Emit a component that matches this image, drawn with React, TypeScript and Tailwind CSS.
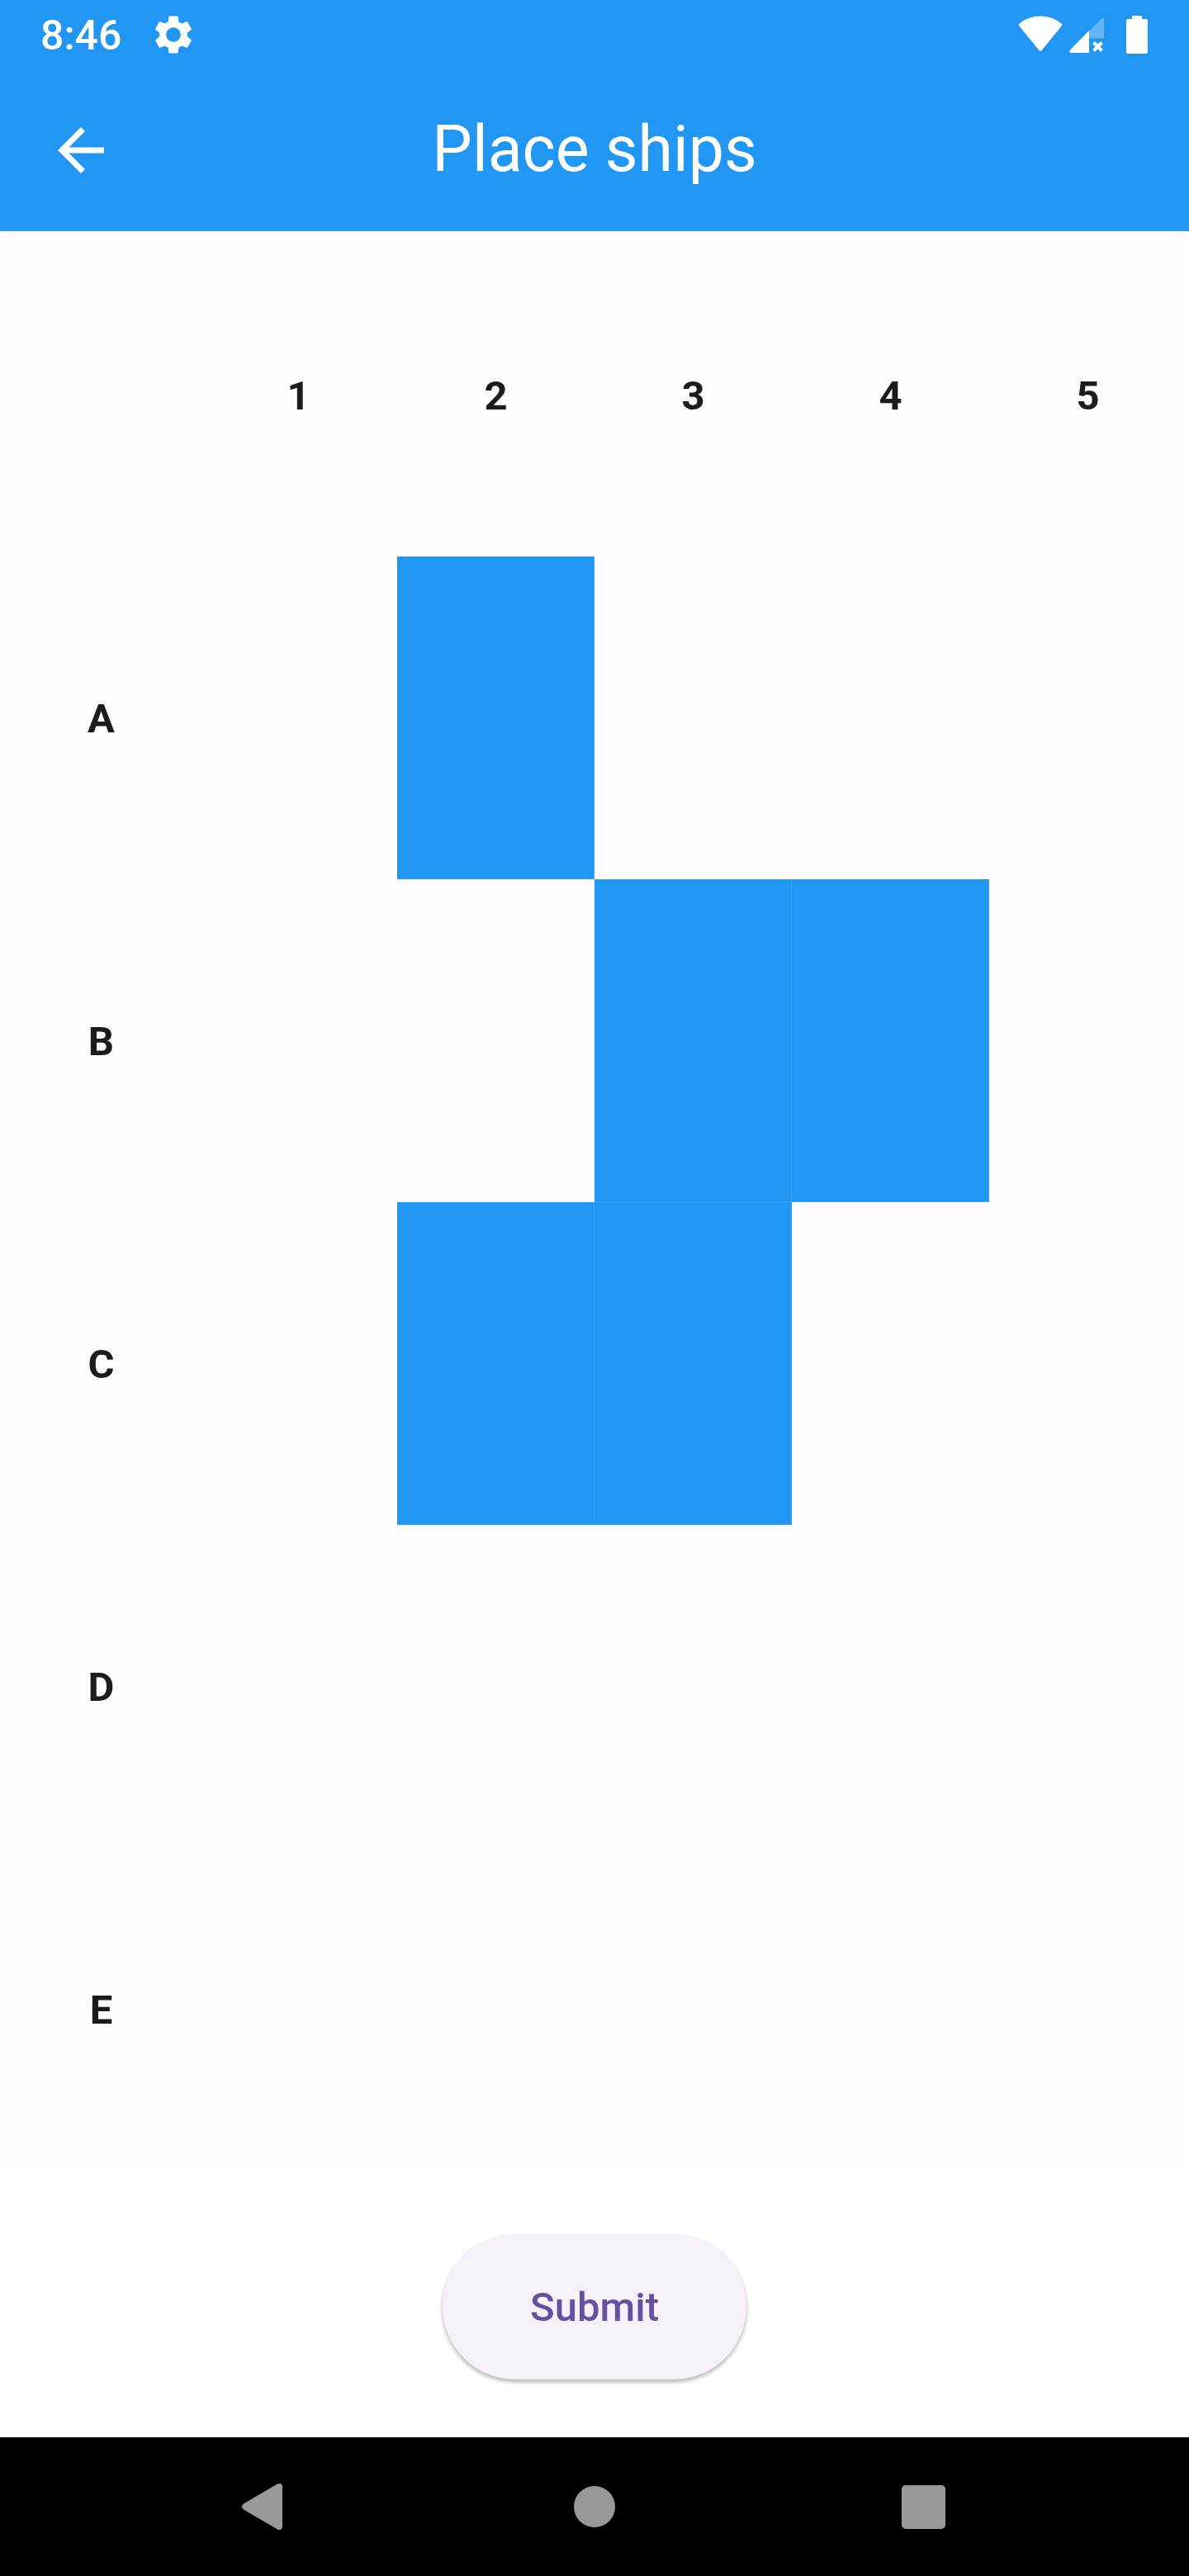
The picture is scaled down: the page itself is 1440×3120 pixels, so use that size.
const COLUMNS = ["1", "2", "3", "4", "5"];
const ROWS = ["A", "B", "C", "D", "E"];
const SHIPS = new Set(["A2", "B3", "B4", "C2", "C3"]);

function StatusBar() {
  return (
    <div className="flex h-[84px] items-center justify-between pr-[50px] pl-[49px]">
      <div className="flex items-center gap-[36px]">
        <span className="pt-[2px] text-[50px] leading-[58px] font-medium">8:46</span>
        <svg className="size-[54px]" viewBox="0 0 24 24" fill="currentColor" aria-hidden="true">
          <path d="M19.43 12.98c.04-.32.07-.64.07-.98s-.03-.66-.07-.98l2.11-1.65c.19-.15.24-.42.12-.64l-2-3.46c-.12-.22-.39-.3-.61-.22l-2.49 1c-.52-.4-1.08-.73-1.69-.98l-.38-2.65C14.46 2.18 14.25 2 14 2h-4c-.25 0-.46.18-.49.42l-.38 2.65c-.61.25-1.17.59-1.69.98l-2.49-1c-.23-.09-.49 0-.61.22l-2 3.46c-.13.22-.07.49.12.64l2.11 1.65c-.04.32-.07.65-.07.98s.03.66.07.98l-2.11 1.65c-.19.15-.24.42-.12.64l2 3.46c.12.22.39.3.61.22l2.49-1c.52.4 1.08.73 1.69.98l.38 2.65c.03.24.24.42.49.42h4c.25 0 .46-.18.49-.42l.38-2.65c.61-.25 1.17-.59 1.69-.98l2.49 1c.23.09.49 0 .61-.22l2-3.46c.12-.22.07-.49-.12-.64l-2.11-1.65zM12 15.9c-2.15 0-3.9-1.75-3.9-3.9s1.75-3.9 3.9-3.9 3.9 1.75 3.9 3.9-1.75 3.9-3.9 3.9z" />
        </svg>
      </div>
      <div className="flex items-center">
        <svg className="h-[46px] w-[54px]" viewBox="0 0 54 46" fill="currentColor" aria-hidden="true">
          <path d="M1 12Q0 10.500 1.500 9.500Q13 .5 27 .5Q41 .5 52.500 9.500Q54 10.500 53 12L29 41.500Q27 44 25 41.500Z" />
        </svg>
        <svg className="ml-2 h-[46px] w-[44px]" viewBox="0 0 44 46" fill="currentColor" aria-hidden="true">
          <path opacity=".3" d="M24 18.500L39.500 3.500Q42 2 42 5V27.500H24Z" />
          <path d="M24 18V45H2.500Q-.500 44.500 1 41.500Z" />
          <path d="M29.500 32.500L39.500 42.500M39.500 32.500L29.500 42.500" stroke="currentColor" strokeWidth="4" />
        </svg>
        <svg className="ml-[25px] h-[46px] w-[26px]" viewBox="0 0 26 46" fill="currentColor" aria-hidden="true">
          <path d="M7 0H19V4H24Q26 4 26 6V44Q26 46 24 46H2Q0 46 0 44V6Q0 4 2 4H7Z" />
        </svg>
      </div>
    </div>
  );
}

function AppBar() {
  return (
    <div className="grid h-[196px] grid-cols-[196px_1fr_196px] items-center">
      <button type="button" aria-label="Back" className="flex h-full items-center justify-center">
        <svg className="size-[84px]" viewBox="0 0 24 24" fill="currentColor" aria-hidden="true">
          <path d="M20 11H7.830l5.590-5.590L12 4l-8 8 8 8 1.410-1.410L7.830 13H20v-2z" />
        </svg>
      </button>
      <h1 className="pb-[2px] text-center text-[77px] leading-[98px] font-normal">Place ships</h1>
    </div>
  );
}

function Board() {
  return (
    <main className="bg-white p-[3px] pb-0">
      <table className="w-full table-fixed border-collapse bg-[#fffbfe] text-[49px] leading-[70px] text-[#1c1b1f]">
        <thead>
          <tr className="h-[391px]">
            <td />
            {COLUMNS.map((column) => (
              <th key={column} scope="col" className="p-0 pt-[3px] text-center font-bold">
                {column}
              </th>
            ))}
          </tr>
        </thead>
        <tbody>
          {ROWS.map((row) => (
            <tr key={row} className="h-[391px]">
              <th scope="row" className="p-0 pt-[3px] text-center font-bold">
                {row}
              </th>
              {COLUMNS.map((column) => {
                const placed = SHIPS.has(row + column);
                return (
                  <td key={column} className="h-[391px] p-0">
                    <button
                      type="button"
                      aria-label={row + column}
                      aria-pressed={placed}
                      className={
                        placed
                          ? "block h-full w-full border-r border-b border-[#3aa2f4] bg-[#2196f3]"
                          : "block h-full w-full"
                      }
                    />
                  </td>
                );
              })}
            </tr>
          ))}
        </tbody>
      </table>
    </main>
  );
}

function NavigationBar() {
  return (
    <nav className="grid h-[168px] grid-cols-[1fr_398px_398px_398px_1fr] items-center bg-black text-[#999999]">
      <button type="button" aria-label="Back" className="col-start-2 flex h-full items-center justify-center">
        <svg className="size-[60px]" viewBox="0 0 60 60" fill="currentColor" aria-hidden="true">
          <path d="M44 2.500Q49.500 0.500 50 6V54Q49.500 59.500 44 57.500L3 33.500Q-1 30 3 26.500Z" />
        </svg>
      </button>
      <button type="button" aria-label="Home" className="flex h-full items-center justify-center">
        <span className="size-[50px] rounded-full bg-[#999999]" />
      </button>
      <button type="button" aria-label="Recent apps" className="flex h-full items-center justify-center">
        <span className="size-[53px] rounded-[5px] bg-[#999999]" />
      </button>
    </nav>
  );
}

export default function App() {
  return (
    <div className="flex min-h-screen flex-col bg-white font-[Roboto,sans-serif]">
      <header className="bg-[#2196f3] text-white">
        <StatusBar />
        <AppBar />
      </header>
      <Board />
      <div className="flex grow items-center justify-center pt-[7px]">
        <button
          type="submit"
          className="h-[176px] rounded-full bg-[#f6f1f9] px-[106px] pt-[2px] text-[49px] leading-[70px] font-medium text-[#6750a4] shadow-[0_3px_5px_rgba(0,0,0,0.3)]"
        >
          Submit
        </button>
      </div>
      <NavigationBar />
    </div>
  );
}
